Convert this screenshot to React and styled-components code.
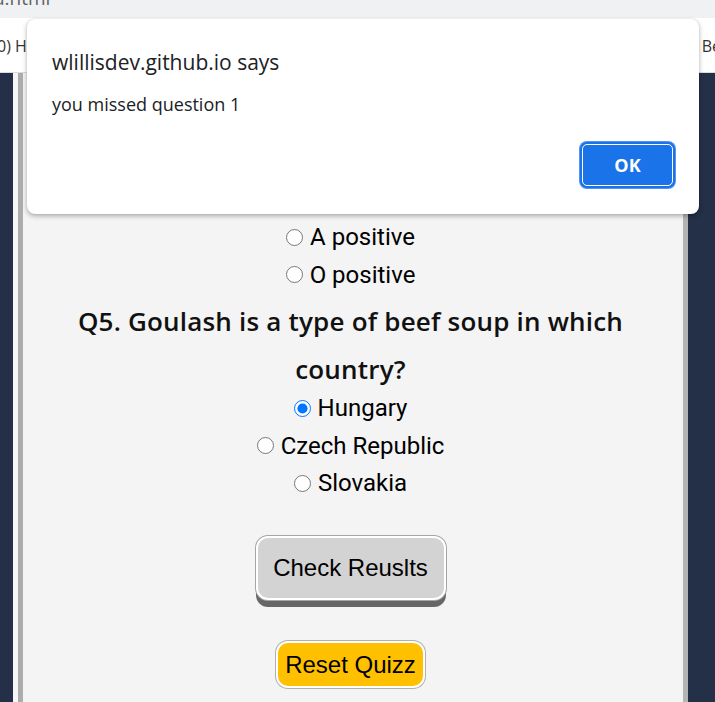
import styled, { createGlobalStyle } from "styled-components";

const GlobalStyle = createGlobalStyle`
    html, body {
        margin: 0;
        padding: 0;
        height: 702px;
        overflow: hidden;
        background: #242f48;
    }
`
const Screen = styled.div`
    position: relative;
    width: 715px;
    height: 702px;
    display: flex;
    flex-direction: column;
    overflow: hidden;
`
const TabStrip = styled.div`
    height: 18px;
    background-color: #f0f1f3;
    overflow: hidden;
    display: flex;
    align-items: flex-end;
`
const TabTitle = styled.span`
    font-family: "Open Sans", "Liberation Sans", sans-serif;
    font-size: 19px;
    line-height: 19px;
    color: #5f6368;
    padding-bottom: 10px;
    margin-left: -6px;
`
const BookmarkBar = styled.div`
    height: 54px;
    background-color: #ffffff;
    border-bottom: 1px solid #dadce0;
    display: flex;
    align-items: center;
    justify-content: space-between;
    font-family: "Open Sans", "Liberation Sans", sans-serif;
    font-size: 16px;
    color: #333;
`
const Bookmark = styled.span`
    margin-left: ${p => p.$left || "0"};
    margin-right: ${p => p.$right || "0"};
    padding-top: 1px;
`
const Page = styled.div`
    flex: 1;
    background-color: #242f48;
    padding: 0 27px 0 18px;
    display: flex;
`
const Panel = styled.div`
    flex: 1;
    background-color: #f4f4f4;
    border-left: 5px solid #acacac;
    border-right: 5px solid #b4b4b4;
    box-shadow: -5px 0 0 #f6f6f6;
    padding: 33px 5px 0 0;
    display: flex;
    flex-direction: column;
    align-items: center;
`
const Option = styled.label`
    display: flex;
    align-items: center;
    height: 37.5px;
    font-family: Roboto, "Liberation Sans", sans-serif;
    font-size: 24px;
    color: #000;
`
const Radio = styled.input`
    width: 17px;
    height: 17px;
    margin: 0 7px 0 0;
`
const Question = styled.h2`
    max-width: 570px;
    margin: 3px 0 -3px;
    text-align: center;
    font-family: "Open Sans", "DejaVu Sans", sans-serif;
    font-weight: 600;
    font-size: 26px;
    letter-spacing: 0.2px;
    line-height: 48px;
    color: #111;
`
const CheckButton = styled.button`
    margin-top: 34px;
    width: 190px;
    height: 64px;
    border: 2px solid #ffffff;
    border-radius: 12px;
    background-color: #d3d3d3;
    box-shadow: 0 0 0 1px #a5a5a5, 0 7px 0 0 #666666;
    font-family: "Liberation Sans", Arial, sans-serif;
    font-size: 24px;
    color: #000;
`
const ResetButton = styled.button`
    margin-top: 41px;
    width: 149px;
    height: 47px;
    border: 2px solid #ffffff;
    border-radius: 12px;
    background-color: #ffc000;
    box-shadow: 0 0 0 1px #b0b0b0;
    font-family: "Liberation Sans", Arial, sans-serif;
    font-size: 24px;
    color: #000;
`
const Dialog = styled.div`
    position: absolute;
    left: 27px;
    top: 19px;
    width: 672px;
    height: 195px;
    box-sizing: border-box;
    background: #ffffff;
    border-radius: 8px;
    box-shadow: 0 2px 5px rgba(0, 0, 0, 0.3), 0 0 1px rgba(0, 0, 0, 0.2);
    padding: 28px 26px 0 25px;
    display: flex;
    flex-direction: column;
    font-family: "Open Sans", "Noto Sans", sans-serif;
    color: #202124;
`
const DialogTitle = styled.div`
    font-size: 21px;
    line-height: 30px;
`
const DialogMessage = styled.div`
    margin-top: 14px;
    font-size: 18px;
    line-height: 26px;
`
const DialogActions = styled.div`
    margin-top: 27px;
    display: flex;
    justify-content: flex-end;
`
const OkButton = styled.button`
    width: 91px;
    height: 42px;
    box-sizing: border-box;
    border: 1px solid #ffffff;
    border-radius: 5px;
    background-color: #1a73e8;
    box-shadow: 0 0 0 2px #1a73e8, 0 0 0 3px #5593f0;
    font-family: "Open Sans", "Liberation Sans", sans-serif;
    font-weight: 700;
    font-size: 18px;
    color: #ffffff;
`

const hidden = ["B positive", "AB negative", "O negative"]

const App = () => {
    return (
        <Screen>
            <GlobalStyle />
            <TabStrip>
                <TabTitle>a.html</TabTitle>
            </TabStrip>
            <BookmarkBar>
                <Bookmark $left="-3px">0) H</Bookmark>
                <Bookmark $right="-6px">Be</Bookmark>
            </BookmarkBar>
            <Page>
                <Panel>
                    {hidden.map(o => (
                        <Option key={o}>
                            <Radio type="radio" name="q4" readOnly />
                            {o}
                        </Option>
                    ))}
                    <Option>
                        <Radio type="radio" name="q4" readOnly />
                        A positive
                    </Option>
                    <Option>
                        <Radio type="radio" name="q4" readOnly />
                        O positive
                    </Option>
                    <Question>Q5. Goulash is a type of beef soup in which country?</Question>
                    <Option>
                        <Radio type="radio" name="q5" checked readOnly />
                        Hungary
                    </Option>
                    <Option>
                        <Radio type="radio" name="q5" readOnly />
                        Czech Republic
                    </Option>
                    <Option>
                        <Radio type="radio" name="q5" readOnly />
                        Slovakia
                    </Option>
                    <CheckButton>Check Reuslts</CheckButton>
                    <ResetButton>Reset Quizz</ResetButton>
                </Panel>
            </Page>
            <Dialog>
                <DialogTitle>wlillisdev.github.io says</DialogTitle>
                <DialogMessage>you missed question 1</DialogMessage>
                <DialogActions>
                    <OkButton>OK</OkButton>
                </DialogActions>
            </Dialog>
        </Screen>
    )
}

export default App
